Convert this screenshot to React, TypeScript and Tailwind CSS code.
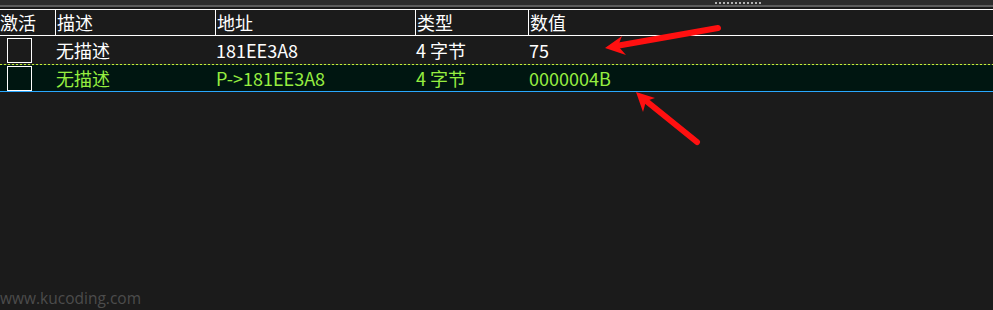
const cols = "grid grid-cols-[55px_1px_159px_1px_199px_1px_112px_1px_1fr]";

function Checkbox() {
  return <div className="ml-[7px] h-[25px] w-[25px] border border-white" />;
}

type Row = { desc: string; addr: string; type: string; value: string };

function Cells({ r }: { r: Row }) {
  return (
    <>
      <Checkbox />
      <div />
      <div className="leading-none">{r.desc}</div>
      <div />
      <div className="leading-none">{r.addr}</div>
      <div />
      <div className="leading-none">{r.type}</div>
      <div />
      <div className="leading-none">{r.value}</div>
    </>
  );
}

export default function App() {
  const plain: Row = { desc: "无描述", addr: "181EE3A8", type: "4 字节", value: "75" };
  const active: Row = { desc: "无描述", addr: "P->181EE3A8", type: "4 字节", value: "0000004B" };

  return (
    <div
      className="relative h-[310px] w-[993px] overflow-hidden bg-[#1b1b1b] text-[18px] text-white"
      style={{ fontFamily: "'Noto Sans CJK SC', 'Noto Sans', sans-serif" }}
    >
      {/* splitter bar */}
      <div className="flex h-[5px] items-start bg-[#2c2c2c] pl-[715px] pt-[2px]">
        <div className="flex gap-[2px]">
          {Array.from({ length: 12 }).map((_, i) => (
            <div key={i} className="h-[2px] w-[2px] bg-[#b0b0b0]" />
          ))}
        </div>
      </div>
      <div className="h-[2px] bg-[#5c5c5c]" />
      <div className="h-[2px] bg-[#1b1b1b]" />

      {/* header */}
      <div className={`${cols} h-[27px] border-y border-white leading-[25px]`}>
        <div>激活</div>
        <div className="bg-white" />
        <div className="pl-[1px]">描述</div>
        <div className="bg-white" />
        <div className="pl-[1px]">地址</div>
        <div className="bg-white" />
        <div className="pl-[1px]">类型</div>
        <div className="bg-white" />
        <div className="pl-[1px]">数值</div>
      </div>

      {/* rows */}
      <div className={`${cols} h-[28px] items-center`}>
        <Cells r={plain} />
      </div>
      <div className="bg-[#001611]">
        <div className="h-px bg-[repeating-linear-gradient(90deg,#c8ec3a_0_2px,#2a4a20_2px_4px)]" />
        <div className={`${cols} h-[26px] items-center text-[#96ee40]`}>
          <Cells r={active} />
        </div>
        <div className="h-px bg-[#2aa8ff]" />
      </div>

      {/* watermark */}
      <div
        className="absolute bottom-[4px] left-0 text-[15.5px] leading-none text-[#4c4c4c]"
        style={{ fontFamily: "'Open Sans', sans-serif" }}
      >
        www.kucoding.com
      </div>

      {/* annotation arrows */}
      <svg className="pointer-events-none absolute inset-0" width="993" height="310">
        <g stroke="#ff1010" strokeWidth="6" strokeLinecap="round">
          <line x1="718" y1="28" x2="616" y2="46" />
          <line x1="697" y1="142" x2="645" y2="100" />
        </g>
        <polygon points="605,48 622,36 618,46 626,55" fill="#ff1010" />
        <polygon points="636,92 655,98 646,101 643,112" fill="#ff1010" />
      </svg>
    </div>
  );
}
